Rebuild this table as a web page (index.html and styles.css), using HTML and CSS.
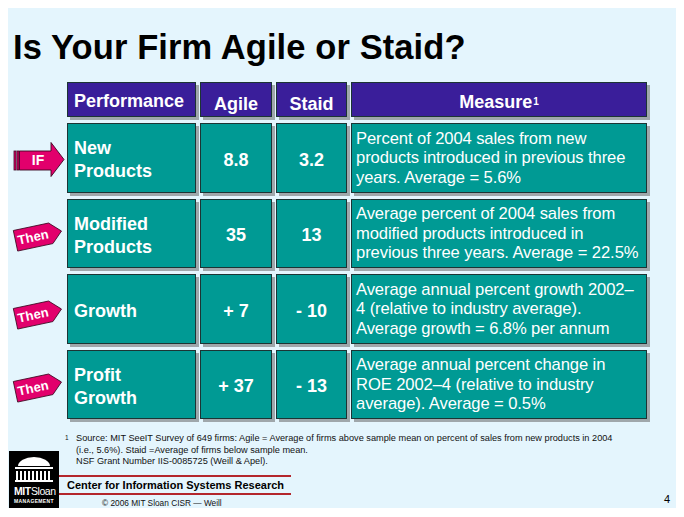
FILE: index.html
```html
<!DOCTYPE html>
<html lang="en">
<head>
<meta charset="utf-8">
<title>Is Your Firm Agile or Staid?</title>
<link rel="stylesheet" href="styles.css">
</head>
<body>
<div class="slide">
  <h1 class="title">Is Your Firm Agile or Staid?</h1>

  <div class="grid">
    <div class="tag"></div>
    <div class="cell head perf">Performance</div>
    <div class="cell head num low">Agile</div>
    <div class="cell head num low">Staid</div>
    <div class="cell head measure-h">Measure<sup>1</sup></div>

    <div class="tag">
      <svg class="if-arrow" width="54" height="36" viewBox="0 0 54 36">
        <rect x="3" y="9" width="2" height="19" fill="#e2006c" stroke="#3b0820" stroke-width="0.8"/>
        <rect x="6" y="9" width="2" height="19" fill="#e2006c" stroke="#3b0820" stroke-width="0.8"/>
        <polygon points="8.5,9 40,9 40,0.5 53,17.5 40,34.5 40,28 8.5,28" fill="#e2006c" stroke="#3b0820" stroke-width="0.9"/>
        <text x="27" y="22.5" class="tag-text if-text">IF</text>
      </svg>
    </div>
    <div class="cell label">New<br>Products</div>
    <div class="cell num">8.8</div>
    <div class="cell num">3.2</div>
    <div class="cell measure">Percent of 2004 sales from new<br>products introduced in previous three<br>years. Average = 5.6%</div>

    <div class="tag">
      <svg class="then-tag" width="54" height="34" viewBox="0 0 54 34">
        <g transform="translate(27 17) rotate(-12)">
          <polygon points="-23,-10.5 13,-10.5 24,0 13,10.5 -23,10.5" fill="#e2006c" stroke="#3b0820" stroke-width="0.8"/>
          <text x="-5" y="4.5" class="tag-text">Then</text>
        </g>
      </svg>
    </div>
    <div class="cell label">Modified<br>Products</div>
    <div class="cell num">35</div>
    <div class="cell num">13</div>
    <div class="cell measure">Average percent of 2004 sales from<br>modified products introduced in<br>previous three years. Average = 22.5%</div>

    <div class="tag tag-low">
      <svg class="then-tag" width="54" height="34" viewBox="0 0 54 34">
        <g transform="translate(27 17) rotate(-12)">
          <polygon points="-23,-10.5 13,-10.5 24,0 13,10.5 -23,10.5" fill="#e2006c" stroke="#3b0820" stroke-width="0.8"/>
          <text x="-5" y="4.5" class="tag-text">Then</text>
        </g>
      </svg>
    </div>
    <div class="cell label">Growth</div>
    <div class="cell num">+ 7</div>
    <div class="cell num">- 10</div>
    <div class="cell measure">Average annual percent growth 2002&ndash;<br>4 (relative to industry average).<br>Average growth = 6.8% per annum</div>

    <div class="tag">
      <svg class="then-tag" width="54" height="34" viewBox="0 0 54 34">
        <g transform="translate(27 17) rotate(-12)">
          <polygon points="-23,-10.5 13,-10.5 24,0 13,10.5 -23,10.5" fill="#e2006c" stroke="#3b0820" stroke-width="0.8"/>
          <text x="-5" y="4.5" class="tag-text">Then</text>
        </g>
      </svg>
    </div>
    <div class="cell label">Profit<br>Growth</div>
    <div class="cell num">+ 37</div>
    <div class="cell num">- 13</div>
    <div class="cell measure">Average annual percent change in<br>ROE 2002&ndash;4 (relative to industry<br>average). Average = 0.5%</div>
  </div>

  <div class="bottom">
    <div class="logo">
      <svg width="50" height="57" viewBox="0 0 50 57">
        <rect width="50" height="57" fill="#000"/>
        <path d="M9 15 A16 9 0 0 1 41 15 Z" fill="#fff"/>
        <rect x="6" y="16" width="38" height="2" fill="#fff"/>
        <g fill="#fff">
          <rect x="7" y="20" width="2" height="9"/>
          <rect x="11" y="20" width="2" height="9"/>
          <rect x="15" y="20" width="2" height="9"/>
          <rect x="19" y="20" width="2" height="9"/>
          <rect x="23" y="20" width="2" height="9"/>
          <rect x="27" y="20" width="2" height="9"/>
          <rect x="31" y="20" width="2" height="9"/>
          <rect x="35" y="20" width="2" height="9"/>
          <rect x="39" y="20" width="2" height="9"/>
        </g>
        <rect x="6" y="29" width="38" height="2" fill="#fff"/>
        <text x="5" y="44" class="logo-mit">MIT<tspan class="logo-sloan">Sloan</tspan></text>
        <text x="5" y="52" class="logo-mgmt">MANAGEMENT</text>
      </svg>
    </div>
    <div class="notes">
      <div class="footnote">
        <span class="fn-mark">1</span>
        <div class="fn-text">Source: MIT SeeIT Survey of 649 firms: Agile = Average of firms above sample mean on percent of sales from new products in 2004<br>(i.e., 5.6%). Staid =Average of firms below sample mean.<br>NSF Grant Number IIS-0085725 (Weill &amp; Apel).</div>
      </div>
      <div class="center-block">
        <div class="red-line"></div>
        <div class="cisr">Center for Information Systems Research</div>
        <div class="red-line"></div>
        <div class="copy">&copy; 2006 MIT Sloan CISR &mdash; Weill</div>
      </div>
    </div>
    <div class="pagenum">4</div>
  </div>
</div>
</body>
</html>
```

FILE: styles.css
```css
* { box-sizing: border-box; }

body {
  margin: 8px;
  background: #ffffff;
  font-family: "Liberation Sans", Arial, sans-serif;
}

.slide {
  width: 669px;
  height: 500px;
  background: #e4f5fd;
  display: flex;
  flex-direction: column;
}

.title {
  margin: 22px 0 0 5px;
  font-size: 34.5px;
  line-height: 34px;
  font-weight: bold;
  color: #000;
  letter-spacing: 0.1px;
}

.grid {
  margin-top: 18px;
  display: grid;
  grid-template-columns: 55px 129px 72px 71px 296px;
  grid-template-rows: 35px 70px 69px 70px 69px;
  column-gap: 4px;
  row-gap: 6px;
}

.cell {
  border: 1px solid #1c3434;
  box-shadow: 3px 3px 0 #9fa7ab;
  background: #009a94;
  color: #fff;
  display: flex;
  align-items: center;
  padding-top: 4px;
}

.head {
  background: #3a1e9a;
  font-size: 18px;
  font-weight: bold;
  padding-top: 3px;
}

.head.low { padding-top: 9px; }
.head.measure-h { justify-content: center; padding-top: 5px; }
.head.measure-h sup { font-size: 10px; vertical-align: 7px; line-height: 0; margin-left: 1px; }

.perf { padding-left: 6px; }

.label {
  padding-left: 6px;
  font-size: 18px;
  line-height: 23px;
  font-weight: bold;
}

.num {
  justify-content: center;
  font-size: 18px;
  font-weight: bold;
}

.measure {
  padding: 0 0 0 4px;
  font-size: 16.6px;
  line-height: 19.5px;
  white-space: nowrap;
  letter-spacing: -0.1px;
}

.tag {
  display: flex;
  align-items: center;
  justify-content: flex-end;
  padding-top: 4px;
}

.tag-low { padding-top: 9px; }

.tag svg { display: block; margin-right: -2px; flex: none; }

.tag-text {
  font-family: "Liberation Sans", Arial, sans-serif;
  font-weight: bold;
  font-size: 13px;
  fill: #fff;
  text-anchor: middle;
}

.if-text { font-size: 14px; }

.bottom {
  margin-top: auto;
  display: flex;
  align-items: flex-end;
}

.logo {
  margin-left: 1px;
  width: 50px;
  height: 57px;
  flex: none;
}

.logo svg { display: block; }

.logo-mit {
  font-family: "Liberation Sans", Arial, sans-serif;
  font-weight: bold;
  font-size: 10.5px;
  fill: #fff;
  letter-spacing: -0.4px;
}

.logo-sloan { font-weight: normal; }

.logo-mgmt {
  font-family: "Liberation Sans", Arial, sans-serif;
  font-weight: bold;
  font-size: 5px;
  fill: #fff;
  letter-spacing: 0.35px;
}

.notes {
  flex: 1;
  display: flex;
  flex-direction: column;
}

.footnote {
  display: flex;
  padding-left: 6px;
  font-size: 9.2px;
  line-height: 11.5px;
  color: #111;
}

.fn-mark {
  width: 11px;
  flex: none;
  font-size: 6.5px;
  line-height: 9px;
}

.fn-text { white-space: nowrap; }

.center-block {
  margin-top: 7.5px;
  width: 232px;
}

.red-line {
  height: 2px;
  background: #b3262c;
}

.cisr {
  height: 16px;
  line-height: 16px;
  padding-left: 8px;
  font-size: 11px;
  font-weight: bold;
  color: #000;
}

.copy {
  margin-top: 3px;
  height: 10px;
  line-height: 10px;
  padding-left: 43px;
  font-size: 8.3px;
  color: #111;
}

.pagenum {
  flex: none;
  padding: 0 7px 3px 0;
  font-size: 11px;
  line-height: 12px;
  color: #000;
}
```
